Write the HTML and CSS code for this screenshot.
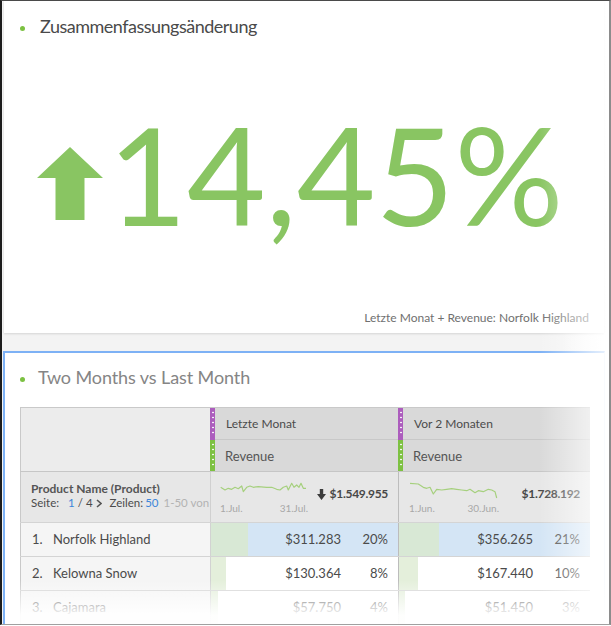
FILE: index.html
```html
<!DOCTYPE html>
<html lang="de">
<head>
<meta charset="utf-8">
<title>Dashboard</title>
<link rel="stylesheet" href="styles.css">
</head>
<body>
<div class="frame">
  <section class="panel-top">
    <h2 class="title title-top"><span class="dot"></span>Zusammenfassungsänderung</h2>
    <div class="kpi">
      <svg class="kpi-arrow" width="66" height="73" viewBox="0 0 66 73"><polygon points="33,0 66,31 47.5,31 47.5,73 18.5,73 18.5,31 0,31" fill="#89c562"/></svg>
      <span class="kpi-value">14,45%</span>
    </div>
    <div class="caption">Letzte Monat + Revenue: Norfolk Highland</div>
  </section>

  <section class="panel-bottom">
    <h2 class="title title-light"><span class="dot dot-tight"></span>Two Months vs Last Month</h2>
    <div class="table">
      <div class="thead">
        <div class="corner"></div>
        <div class="colhead">
          <div class="hcell"><span class="handle purple"></span><span class="hlabel sep">Letzte Monat</span></div>
          <div class="hcell hcell-b"><span class="handle green"></span><span class="hlabel metric">Revenue</span></div>
        </div>
        <div class="colhead">
          <div class="hcell"><span class="handle purple"></span><span class="hlabel sep">Vor 2 Monaten</span></div>
          <div class="hcell hcell-b"><span class="handle green"></span><span class="hlabel metric">Revenue</span></div>
        </div>
      </div>

      <div class="summary">
        <div class="sum-label">
          <div class="dim-name">Product Name (Product)</div>
          <div class="pager"><span>Seite:</span><span class="pg-num pg-first">1</span><span class="pg-of">/ 4</span><svg class="chev" width="6" height="9" viewBox="0 0 6 9"><polyline points="1,1 5,4.5 1,8" fill="none" stroke="#555" stroke-width="1.6"/></svg><span class="pg-rows">Zeilen:</span><span class="pg-num">50</span><span class="pg-range">1-50 von</span></div>
        </div>
        <div class="scell">
          <div class="spark">
            <svg width="88" height="18" viewBox="0 0 88 18"><polyline fill="none" stroke="#a6d07e" stroke-width="1.2" stroke-linejoin="round" points="0.7,6.3 5,9 8.3,7.3 11.7,8.3 15,6.3 18.3,7.7 21.7,5 23.3,10.7 26.7,6.3 30,5 33.3,6.3 38.3,5.7 46.7,6.3 51.7,6.3 56.7,8.3 60,9 63.3,6.3 66.7,5 68.3,9 71.7,2.3 74,6.3 76.7,4 79,6.3 81,2.3 83.3,7.3 86,7.3"/></svg>
            <div class="spark-labels"><span>1.Jul.</span><span>31.Jul.</span></div>
          </div>
          <div class="total"><svg width="9" height="11" viewBox="0 0 9 11"><polygon points="2.8,0 6.2,0 6.2,5 9,5 4.5,11 0,5 2.8,5" fill="#3c3c3c"/></svg>$1.549.955</div>
        </div>
        <div class="scell c2">
          <div class="spark spark-2">
            <svg width="90" height="18" viewBox="0 0 90 18"><polyline fill="none" stroke="#a6d07e" stroke-width="1.2" stroke-linejoin="round" points="1,2.3 9.3,3 14.3,6.3 17.7,7.3 21,6.3 24.3,13 27.7,8.3 32.7,9 37.7,8.3 42.7,7.7 47.7,8.3 52.7,9 57.7,9.7 61,8.3 66,11.7 69.3,9.7 74.3,10.7 79.3,8.3 82.7,9 86,10.7 87.7,17"/></svg>
            <div class="spark-labels"><span>1.Jun.</span><span>30.Jun.</span></div>
          </div>
          <div class="total">$1.728.192</div>
        </div>
      </div>

      <div class="row selected">
        <div class="ncell"><span class="rank">1.</span>Norfolk Highland</div>
        <div class="mcell"><span class="bar" style="width:20%"></span><span class="val">$311.283</span><span class="pct">20%</span></div>
        <div class="mcell c2"><span class="bar" style="width:21%"></span><span class="val">$356.265</span><span class="pct">21%</span></div>
      </div>
      <div class="row">
        <div class="ncell"><span class="rank">2.</span>Kelowna Snow</div>
        <div class="mcell"><span class="bar" style="width:8%"></span><span class="val">$130.364</span><span class="pct">8%</span></div>
        <div class="mcell c2"><span class="bar" style="width:10%"></span><span class="val">$167.440</span><span class="pct">10%</span></div>
      </div>
      <div class="row">
        <div class="ncell"><span class="rank">3.</span>Cajamara</div>
        <div class="mcell"><span class="bar" style="width:4%"></span><span class="val">$57.750</span><span class="pct">4%</span></div>
        <div class="mcell c2"><span class="bar" style="width:3%"></span><span class="val">$51.450</span><span class="pct">3%</span></div>
      </div>
    </div>
  </section>

  <div class="fade-right"></div>
  <div class="fade-bottom"></div>
</div>
</body>
</html>
```

FILE: styles.css
```css
* { box-sizing: border-box; }

html, body {
  margin: 0;
  padding: 0;
  background: #fff;
}

body {
  font-family: Lato, "Open Sans", "DejaVu Sans", sans-serif;
  color: #4b4b4b;
}

.frame {
  position: relative;
  width: 611px;
  height: 625px;
  border-top: 1px solid #4a4a4a;
  border-left: 2px solid #1c1c1c;
  border-right: 2px solid #8c8c8c;
  border-bottom: 1px solid #a0a0a0;
  background: linear-gradient(to right, #f3f3f3 0, #f3f3f3 560px, #ffffff 600px);
  display: flex;
  flex-direction: column;
  overflow: hidden;
}

/* ---------- top panel ---------- */
.panel-top {
  margin-left: 2px;
  width: 600px;
  height: 332px;
  flex: none;
  background: #fff;
  box-shadow: 0 1px 2px rgba(0, 0, 0, 0.13);
  display: flex;
  flex-direction: column;
  padding: 13px 0 7px 16px;
}

.title {
  margin: 0;
  font-size: 18px;
  line-height: 24px;
  font-weight: 400;
  color: #4a4a4a;
  white-space: nowrap;
}

.title-top {
  letter-spacing: -0.5px;
}

.title-light {
  color: #858585;
  letter-spacing: -0.1px;
}

.dot {
  display: inline-block;
  width: 5px;
  height: 5px;
  border-radius: 50%;
  background: #7cc142;
  vertical-align: middle;
  margin-right: 15px;
}

.dot-tight {
  margin-right: 13px;
}

.kpi {
  display: flex;
  align-items: flex-start;
  margin-top: 68px;
  padding-left: 17px;
}

.kpi-arrow {
  flex: none;
  margin-top: 41px;
}

.kpi-value {
  font-size: 136px;
  line-height: 136px;
  color: #89c562;
  margin-left: 5px;
  white-space: nowrap;
}

.caption {
  margin-top: auto;
  align-self: flex-end;
  padding-right: 15px;
  font-size: 12px;
  line-height: 16px;
  color: #707070;
  white-space: nowrap;
}

/* ---------- bottom panel ---------- */
.panel-bottom {
  margin-top: 18px;
  margin-left: 1px;
  width: 602px;
  flex: 1;
  min-height: 0;
  overflow: hidden;
  background: #fff;
  border-top: 2px solid #7db1f5;
  border-left: 2px solid #7db1f5;
  border-right: 1px solid #e3edf9;
  padding: 12px 0 0 15px;
}

.table {
  margin-top: 18px;
  width: 570px;
  font-size: 13px;
}

.thead,
.summary,
.row {
  display: grid;
  grid-template-columns: 190px 188px 192px;
}

.thead {
  border-top: 1px solid #c9c9c9;
}

.corner {
  border-left: 1px solid #c9c9c9;
  background: #ececec;
}

.colhead {
  display: flex;
  flex-direction: column;
}

.hcell {
  display: flex;
  height: 32px;
  background: #d9d9d9;
}

.hcell-b {
  height: 31px;
}

.handle {
  width: 5px;
  flex: none;
}

.handle::before {
  content: "";
  display: block;
  width: 2px;
  height: 25px;
  margin: 2px auto 0;
  background: radial-gradient(circle, rgba(255, 255, 255, 0.9) 0.9px, transparent 1.15px) 0 0 / 2px 5px repeat-y;
}

.purple { background: #ac5dbd; }
.green { background: #7dc142; }

.hlabel {
  flex: 1;
  display: flex;
  align-items: center;
  padding-left: 11px;
  font-size: 12px;
  color: #4b4b4b;
  white-space: nowrap;
}

.hlabel.sep {
  border-bottom: 1px solid #c8c8c8;
}

.hlabel.metric {
  font-size: 13px;
  color: #555;
  padding-left: 10px;
}

/* summary row */
.summary {
  border-top: 1px solid #c6c6c6;
  background: #e7e7e7;
  height: 51px;
}

.sum-label {
  border-left: 1px solid #c9c9c9;
  padding: 10px 0 0 10px;
  white-space: nowrap;
}

.dim-name {
  font-weight: 700;
  font-size: 12px;
  line-height: 14px;
  color: #555;
}

.pager {
  font-size: 11.5px;
  line-height: 14px;
  color: #4b4b4b;
  display: flex;
  align-items: center;
}

.pg-num { color: #3d86d9; margin-left: 2px; }
.pg-first { margin-left: 9px; }
.pg-of { margin-left: 3px; }
.chev { margin-left: 3px; flex: none; }
.pg-rows { margin-left: 8px; }
.pg-range { margin-left: 5px; color: #b3b3b3; }

.scell {
  border-left: 1px solid #d0d0d0;
  display: flex;
  padding: 9px 10px 0 9px;
}

.scell.c2 {
  border-left-color: #bdbdbd;
  padding-left: 10px;
}

.spark {
  width: 88px;
  flex: none;
}

.spark-2 {
  width: 90px;
}

.spark svg {
  display: block;
}

.spark-labels {
  display: flex;
  justify-content: space-between;
  font-size: 10px;
  line-height: 12px;
  color: #a8a8a8;
  margin-top: 3px;
}

.total {
  margin-left: auto;
  align-self: flex-start;
  margin-top: 5px;
  display: flex;
  align-items: center;
  gap: 4px;
  font-weight: 700;
  font-size: 12px;
  line-height: 16px;
  color: #474747;
  letter-spacing: -0.3px;
  white-space: nowrap;
}

/* data rows */
.row {
  border-top: 1px solid #d4d4d4;
  height: 34px;
}

.ncell {
  border-left: 1px solid #c9c9c9;
  background: #f5f5f5;
  display: flex;
  align-items: center;
  padding: 0 0 2px 11px;
  white-space: nowrap;
}

.rank {
  width: 21px;
}

.mcell {
  border-left: 1px solid #d2d2d2;
  display: flex;
  align-items: stretch;
  background: #fff;
}

.mcell.c2 {
  border-left-color: #bcbcbc;
}

.row.selected .mcell {
  background: #d4e5f5;
}

.bar {
  background: #e4efdb;
  flex: none;
}

.row.selected .bar {
  background: #d8e8d5;
}

.val {
  margin-left: auto;
  align-self: center;
  padding-bottom: 2px;
}

.pct {
  align-self: center;
  width: 57px;
  padding: 0 10px 2px 0;
  text-align: right;
}

/* fades over the content */
.fade-right {
  position: absolute;
  top: 0;
  bottom: 0;
  right: 0;
  width: 70px;
  background: linear-gradient(to right, rgba(255, 255, 255, 0), rgba(255, 255, 255, 0.85));
  pointer-events: none;
}

.fade-bottom {
  position: absolute;
  left: 3px;
  right: 0;
  bottom: 0;
  height: 44px;
  background: linear-gradient(to bottom, rgba(255, 255, 255, 0), rgba(255, 255, 255, 0.95) 80%);
  pointer-events: none;
}
```
